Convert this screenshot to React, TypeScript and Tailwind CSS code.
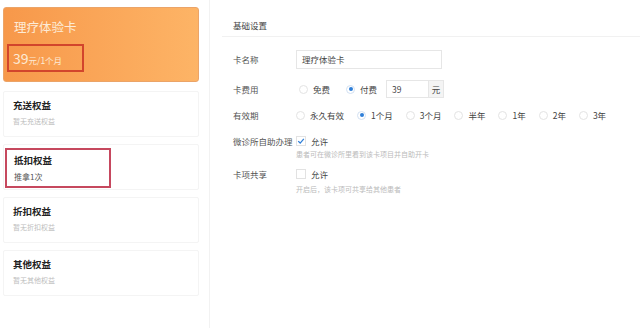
import React from 'react';

const font = { fontFamily: '"Noto Sans CJK SC", "Noto Sans", sans-serif' };

const benefits = [
  { title: '充送权益', sub: '暂无充送权益' },
  { title: '抵扣权益', sub: '推拿1次', marked: true },
  { title: '折扣权益', sub: '暂无折扣权益' },
  { title: '其他权益', sub: '暂无其他权益' },
];

const periods = ['永久有效', '1个月', '3个月', '半年', '1年', '2年', '3年'];

function Radio({ checked, label }: { checked?: boolean; label: string }) {
  return (
    <div className="flex items-center gap-[5px] whitespace-nowrap">
      <span
        className={`w-[9px] h-[9px] rounded-full border flex items-center justify-center ${
          checked ? 'border-[#d3e1f2]' : 'border-[#e3e3e3]'
        }`}
      >
        {checked && <span className="w-[4px] h-[4px] rounded-full bg-[#2f7fd8]" />}
      </span>
      <span className="text-[8.5px] text-[#444] leading-[12px]">{label}</span>
    </div>
  );
}

function Check({ checked }: { checked?: boolean }) {
  return (
    <span className="w-[10px] h-[10px] border border-[#e2e2e2] flex items-center justify-center bg-white">
      {checked && (
        <svg width="8" height="8" viewBox="0 0 10 10">
          <path d="M1.5 5.2 L4 7.6 L8.5 2.4" stroke="#2f7fd8" strokeWidth="1.6" fill="none" />
        </svg>
      )}
    </span>
  );
}

function Label({ text, h }: { text: string; h: number }) {
  return (
    <div
      className="w-[63px] shrink-0 text-[8.5px] text-[#555] whitespace-nowrap flex items-center"
      style={{ height: h }}
    >
      {text}
    </div>
  );
}

export default function App() {
  return (
    <div className="w-[640px] h-[328px] bg-white flex overflow-hidden" style={font}>
      {/* 左侧卡片 */}
      <div className="w-[210px] shrink-0 border-r border-[#f2f2f2] pl-[3px] pr-[10px] pt-[7px] flex flex-col">
        <div className="h-[75px] rounded-[3px] border border-[#eba468] bg-gradient-to-r from-[#f7984a] to-[#fdb466] px-[10px] pt-[11px]">
          <div className="text-[12.5px] text-[#fdebd6] leading-[16px]">理疗体验卡</div>
          <div className="mt-[9px] -ml-[7px] w-[77px] h-[28px] border-2 border-[#d2452c] flex items-center pl-[4px] text-[#fdebd6]">
            <span className="text-[14px] leading-[18px]">39</span>
            <span className="text-[8.5px] leading-[12px] mt-[3px]">元/1个月</span>
          </div>
        </div>
        <div className="mt-[9px] flex flex-col gap-[7px]">
          {benefits.map((b) => (
            <div key={b.title} className="h-[46px] border border-[#f4f4f4] rounded-[2px] relative">
              {b.marked ? (
                <div className="absolute left-[1px] top-[3px] w-[106px] h-[40px] border-2 border-[#c6485e] pl-[7px] pt-[3px]">
                  <div className="text-[9.5px] font-bold text-[#222] leading-[14px]">{b.title}</div>
                  <div className="text-[8px] text-[#555] leading-[12px] mt-[4px]">{b.sub}</div>
                </div>
              ) : (
                <div className="pl-[9px] pt-[6px]">
                  <div className="text-[9.5px] font-bold text-[#222] leading-[14px]">{b.title}</div>
                  <div className="text-[7px] text-[#bdbdbd] leading-[12px] mt-[3px]">{b.sub}</div>
                </div>
              )}
            </div>
          ))}
        </div>
      </div>

      {/* 右侧设置 */}
      <div className="flex-1 pl-[12px]">
        <div className="h-[37px] border-b border-[#f1f1f1] pl-[11px] pt-[18px] text-[8.5px] text-[#444] leading-[14px]">
          基础设置
        </div>
        <div className="pl-[11px] flex flex-col">
          <div className="flex mt-[13px]">
            <Label text="卡名称" h={19} />
            <div className="w-[146px] h-[19px] border border-[#e6e6e6] text-[8.5px] text-[#444] leading-[17px] pl-[5px]">
              理疗体验卡
            </div>
          </div>

          <div className="flex mt-[11px]">
            <Label text="卡费用" h={18} />
            <div className="flex items-center h-[18px] pl-[3px]">
              <Radio label="免费" />
              <div className="ml-[16px]">
                <Radio checked label="付费" />
              </div>
              <div className="flex h-[18px] ml-[9px]">
                <div className="w-[43px] border border-[#e6e6e6] text-[8.5px] text-[#444] leading-[16px] pl-[5px]">39</div>
                <div className="w-[15px] bg-[#f4f4f4] border border-l-0 border-[#e6e6e6] text-[8.5px] text-[#444] leading-[16px] text-center">元</div>
              </div>
            </div>
          </div>

          <div className="flex mt-[8px]">
            <Label text="有效期" h={18} />
            <div className="flex items-center h-[18px] gap-[13px]">
              {periods.map((p) => (
                <Radio key={p} checked={p === '1个月'} label={p} />
              ))}
            </div>
          </div>

          <div className="flex mt-[9px]">
            <Label text="微诊所自助办理" h={16} />
            <div>
              <div className="flex items-center h-[16px] gap-[5px]">
                <Check checked />
                <span className="text-[8.5px] text-[#444]">允许</span>
              </div>
              <div className="text-[7px] text-[#bbb] leading-[10px] whitespace-nowrap">
                患者可在微诊所里看到该卡项目并自助开卡
              </div>
            </div>
          </div>

          <div className="flex mt-[7px]">
            <Label text="卡项共享" h={16} />
            <div>
              <div className="flex items-center h-[16px] gap-[5px]">
                <Check />
                <span className="text-[8.5px] text-[#444]">允许</span>
              </div>
              <div className="text-[7px] text-[#bbb] leading-[10px] mt-[2px] whitespace-nowrap">
                开启后，该卡项可共享给其他患者
              </div>
            </div>
          </div>
        </div>
      </div>
    </div>
  );
}
